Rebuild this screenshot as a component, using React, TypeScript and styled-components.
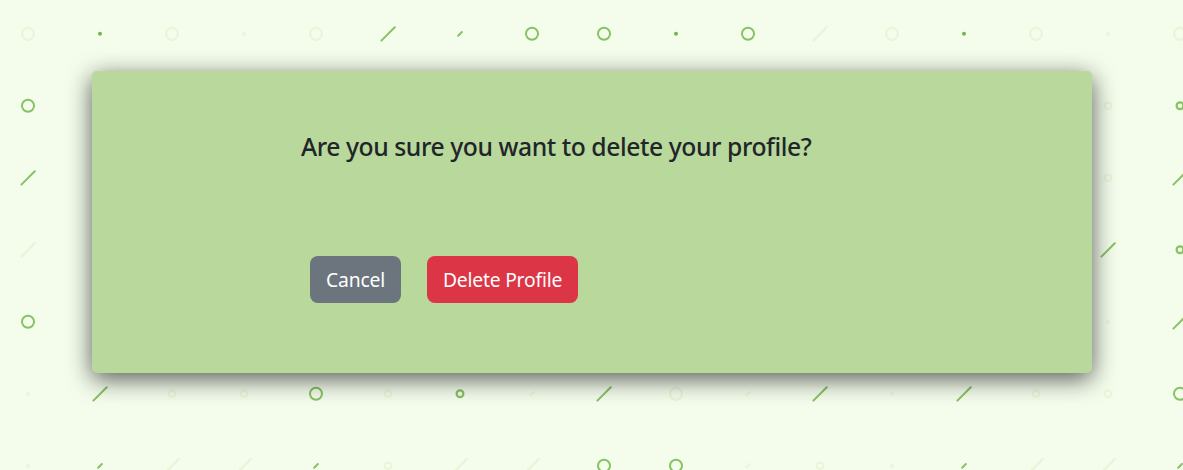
import React from 'react';
import styled, { createGlobalStyle } from 'styled-components';

const GlobalStyle = createGlobalStyle`
  *, *::before, *::after { box-sizing: border-box; }
  body {
    margin: 0;
    background: #f4fdec;
    color: #212529;
    font-family: 'Segoe UI', 'Noto Sans', 'Open Sans', sans-serif;
  }
`;

const Page = styled.main`
  position: relative;
  height: 470px;
  padding: 71px 91px 0 92px;
  overflow: hidden;
`;

const Backdrop = styled.svg`
  position: absolute;
  inset: 0;
  width: 1183px;
  height: 470px;
`;

const Card = styled.section`
  position: relative;
  width: 1000px;
  height: 302px;
  padding: 59px 208px 0 209px;
  border-radius: 5px;
  background: #b8d89c;
  box-shadow: 0 6px 24px rgba(0, 0, 0, 0.65);
`;

const Title = styled.h1`
  margin: 0 0 92px;
  font-size: 24.7px;
  font-weight: 500;
  line-height: 34px;
  letter-spacing: -0.43px;
  white-space: nowrap;
`;

const Actions = styled.div`
  display: flex;
  gap: 26px;
  padding-left: 9px;
`;

const Button = styled.button<{ $color: string; $width: number }>`
  width: ${({ $width }) => $width}px;
  height: 47px;
  padding: 1px 0 0;
  border: 0;
  border-radius: 8px;
  background: ${({ $color }) => $color};
  color: #fff;
  font-family: inherit;
  font-size: 19.3px;
  line-height: 30px;
  letter-spacing: -0.2px;
  white-space: nowrap;
`;

/*
 * One character per 72px cell. Upper case is the strong tint, lower case the faint one.
 * O large ring, R small ring, L long stroke, S short stroke, D dot.
 */
const rows = [
  'oDodoLSOODOloDodo',
  'O..............rR',
  'L..............rL',
  'l..............LR',
  'O..............dL',
  'dLrrOrRsLosLdLrrO',
  'dSllSrllOOsrdSllS',
];

function Mark({ kind, x, y }: { kind: string; x: number; y: number }) {
  const faint = kind === kind.toLowerCase();
  const color = faint ? '#eaf6da' : '#87c263';
  const stroke = { fill: 'none', stroke: color, strokeWidth: faint ? 2.4 : 2 };
  switch (kind.toUpperCase()) {
    case 'O':
      return <circle cx={x} cy={y} r={6} {...stroke} />;
    case 'R':
      return <circle cx={x} cy={y} r={3.4} {...stroke} strokeWidth={2.2} />;
    case 'L':
      return <path d={`M${x - 6.6} ${y + 6.8}L${x + 6.8} ${y - 6.6}`} {...stroke} strokeLinecap="round" />;
    case 'S':
      return <path d={`M${x - 1.8} ${y + 1.9}L${x + 1.9} ${y - 1.8}`} {...stroke} strokeLinecap="round" />;
    case 'D':
      return <circle cx={x} cy={y} r={2} fill={faint ? color : '#74b54d'} />;
    default:
      return null;
  }
}

export default function App() {
  return (
    <>
      <GlobalStyle />
      <Page>
        <Backdrop aria-hidden="true">
          {rows.flatMap((row, j) =>
            [...row].map((kind, i) => (
              <Mark key={`${i}-${j}`} kind={kind} x={28 + i * 72} y={33.8 + j * 72} />
            )),
          )}
        </Backdrop>
        <Card>
          <Title>Are you sure you want to delete your profile?</Title>
          <Actions>
            <Button $color="#6c757d" $width={91}>Cancel</Button>
            <Button $color="#dc3545" $width={151}>Delete Profile</Button>
          </Actions>
        </Card>
      </Page>
    </>
  );
}
